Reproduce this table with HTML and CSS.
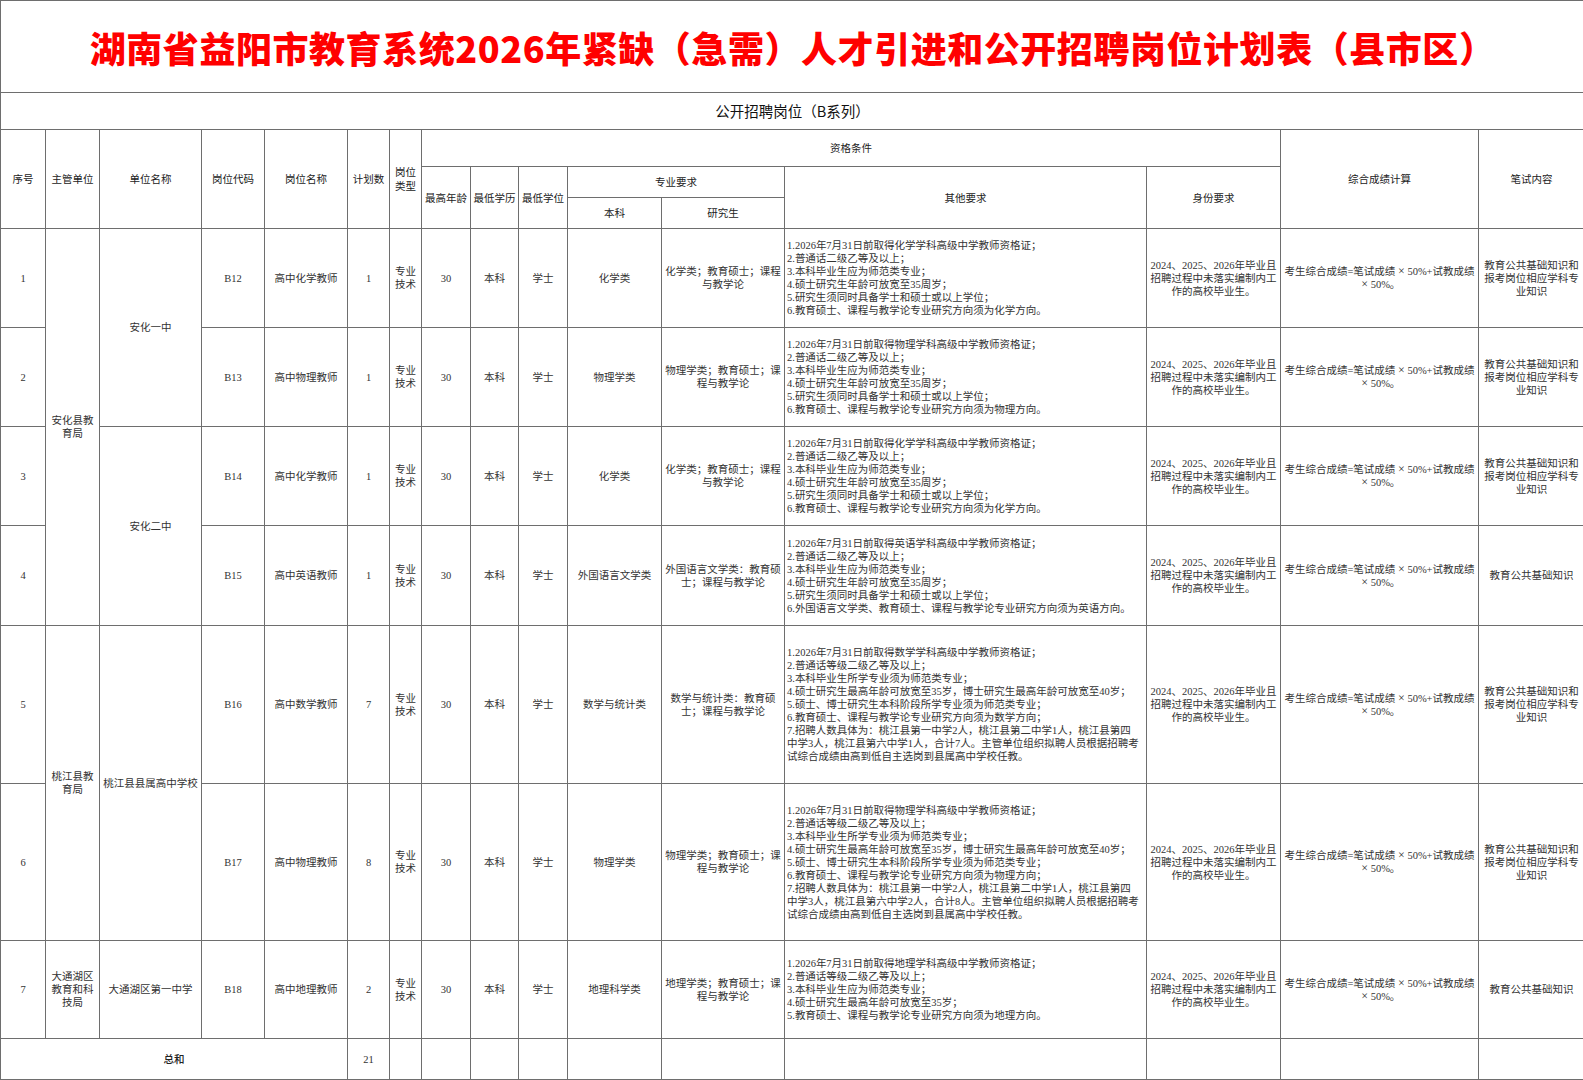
FILE: index.html
```html
<!DOCTYPE html>
<html lang="zh-CN">
<head>
<meta charset="utf-8">
<title>湖南省益阳市教育系统2026年紧缺（急需）人才引进和公开招聘岗位计划表（县市区）</title>
<link rel="stylesheet" href="styles.css">
</head>
<body>
<table class="sheet">
  <colgroup>
    <col class="w45"><col class="w54"><col class="w102"><col class="w63"><col class="w83"><col class="w42"><col class="w32"><col class="w49"><col class="w48"><col class="w49"><col class="w94"><col class="w123"><col class="w362"><col class="w134"><col class="w198"><col class="w106">
  </colgroup>
  <tr class="r-title"><td colspan="16" class="title">湖南省益阳市教育系统2026年紧缺（急需）人才引进和公开招聘岗位计划表（县市区）</td></tr>
  <tr class="r-sub"><td colspan="16" class="subtitle">公开招聘岗位（B系列）</td></tr>
  <tr class="r-h1">
    <td rowspan="3" class="hd">序号</td>
    <td rowspan="3" class="hd">主管单位</td>
    <td rowspan="3" class="hd">单位名称</td>
    <td rowspan="3" class="hd">岗位代码</td>
    <td rowspan="3" class="hd">岗位名称</td>
    <td rowspan="3" class="hd">计划数</td>
    <td rowspan="3" class="hd">岗位类型</td>
    <td colspan="7" class="hd">资格条件</td>
    <td rowspan="3" class="hd">综合成绩计算</td>
    <td rowspan="3" class="hd">笔试内容</td>
  </tr>
  <tr class="r-h2">
    <td rowspan="2" class="hd">最高年龄</td>
    <td rowspan="2" class="hd">最低学历</td>
    <td rowspan="2" class="hd">最低学位</td>
    <td colspan="2" class="hd">专业要求</td>
    <td rowspan="2" class="hd">其他要求</td>
    <td rowspan="2" class="hd">身份要求</td>
  </tr>
  <tr class="r-h3">
    <td class="hd">本科</td>
    <td class="hd">研究生</td>
  </tr>

  <tr class="r-a">
    <td class="c">1</td>
    <td rowspan="4" class="c">安化县教育局</td>
    <td rowspan="2" class="c">安化一中</td>
    <td class="c">B12</td>
    <td class="c">高中化学教师</td>
    <td class="c">1</td>
    <td class="c">专业技术</td>
    <td class="c">30</td>
    <td class="c">本科</td>
    <td class="c">学士</td>
    <td class="c">化学类</td>
    <td class="c">化学类；教育硕士；课程<br>与教学论</td>
    <td class="req">1.2026年7月31日前取得化学学科高级中学教师资格证；<br>2.普通话二级乙等及以上；<br>3.本科毕业生应为师范类专业；<br>4.硕士研究生年龄可放宽至35周岁；<br>5.研究生须同时具备学士和硕士或以上学位；<br>6.教育硕士、课程与教学论专业研究方向须为化学方向。</td>
    <td class="c">2024、2025、2026年毕业且<br>招聘过程中未落实编制内工<br>作的高校毕业生。</td>
    <td class="c">考生综合成绩=笔试成绩<span class="x">×</span>50%+试教成绩<br><span class="x">×</span>50%。</td>
    <td class="c">教育公共基础知识和<br>报考岗位相应学科专<br>业知识</td>
  </tr>
  <tr class="r-a">
    <td class="c">2</td>
    <td class="c">B13</td>
    <td class="c">高中物理教师</td>
    <td class="c">1</td>
    <td class="c">专业技术</td>
    <td class="c">30</td>
    <td class="c">本科</td>
    <td class="c">学士</td>
    <td class="c">物理学类</td>
    <td class="c">物理学类；教育硕士；课<br>程与教学论</td>
    <td class="req">1.2026年7月31日前取得物理学科高级中学教师资格证；<br>2.普通话二级乙等及以上；<br>3.本科毕业生应为师范类专业；<br>4.硕士研究生年龄可放宽至35周岁；<br>5.研究生须同时具备学士和硕士或以上学位；<br>6.教育硕士、课程与教学论专业研究方向须为物理方向。</td>
    <td class="c">2024、2025、2026年毕业且<br>招聘过程中未落实编制内工<br>作的高校毕业生。</td>
    <td class="c">考生综合成绩=笔试成绩<span class="x">×</span>50%+试教成绩<br><span class="x">×</span>50%。</td>
    <td class="c">教育公共基础知识和<br>报考岗位相应学科专<br>业知识</td>
  </tr>
  <tr class="r-a">
    <td class="c">3</td>
    <td rowspan="2" class="c">安化二中</td>
    <td class="c">B14</td>
    <td class="c">高中化学教师</td>
    <td class="c">1</td>
    <td class="c">专业技术</td>
    <td class="c">30</td>
    <td class="c">本科</td>
    <td class="c">学士</td>
    <td class="c">化学类</td>
    <td class="c">化学类；教育硕士；课程<br>与教学论</td>
    <td class="req">1.2026年7月31日前取得化学学科高级中学教师资格证；<br>2.普通话二级乙等及以上；<br>3.本科毕业生应为师范类专业；<br>4.硕士研究生年龄可放宽至35周岁；<br>5.研究生须同时具备学士和硕士或以上学位；<br>6.教育硕士、课程与教学论专业研究方向须为化学方向。</td>
    <td class="c">2024、2025、2026年毕业且<br>招聘过程中未落实编制内工<br>作的高校毕业生。</td>
    <td class="c">考生综合成绩=笔试成绩<span class="x">×</span>50%+试教成绩<br><span class="x">×</span>50%。</td>
    <td class="c">教育公共基础知识和<br>报考岗位相应学科专<br>业知识</td>
  </tr>
  <tr class="r-b">
    <td class="c">4</td>
    <td class="c">B15</td>
    <td class="c">高中英语教师</td>
    <td class="c">1</td>
    <td class="c">专业技术</td>
    <td class="c">30</td>
    <td class="c">本科</td>
    <td class="c">学士</td>
    <td class="c">外国语言文学类</td>
    <td class="c">外国语言文学类：教育硕<br>士；课程与教学论</td>
    <td class="req">1.2026年7月31日前取得英语学科高级中学教师资格证；<br>2.普通话二级乙等及以上；<br>3.本科毕业生应为师范类专业；<br>4.硕士研究生年龄可放宽至35周岁；<br>5.研究生须同时具备学士和硕士或以上学位；<br>6.外国语言文学类、教育硕士、课程与教学论专业研究方向须为英语方向。</td>
    <td class="c">2024、2025、2026年毕业且<br>招聘过程中未落实编制内工<br>作的高校毕业生。</td>
    <td class="c">考生综合成绩=笔试成绩<span class="x">×</span>50%+试教成绩<br><span class="x">×</span>50%。</td>
    <td class="c">教育公共基础知识</td>
  </tr>
  <tr class="r-c">
    <td class="c">5</td>
    <td rowspan="2" class="c">桃江县教育局</td>
    <td rowspan="2" class="c">桃江县县属高中学校</td>
    <td class="c">B16</td>
    <td class="c">高中数学教师</td>
    <td class="c">7</td>
    <td class="c">专业技术</td>
    <td class="c">30</td>
    <td class="c">本科</td>
    <td class="c">学士</td>
    <td class="c">数学与统计类</td>
    <td class="c">数学与统计类：教育硕<br>士；课程与教学论</td>
    <td class="req">1.2026年7月31日前取得数学学科高级中学教师资格证；<br>2.普通话等级二级乙等及以上；<br>3.本科毕业生所学专业须为师范类专业；<br>4.硕士研究生最高年龄可放宽至35岁，博士研究生最高年龄可放宽至40岁；<br>5.硕士、博士研究生本科阶段所学专业须为师范类专业；<br>6.教育硕士、课程与教学论专业研究方向须为数学方向；<br>7.招聘人数具体为：桃江县第一中学2人，桃江县第二中学1人，桃江县第四<br>中学3人，桃江县第六中学1人，合计7人。主管单位组织拟聘人员根据招聘考<br>试综合成绩由高到低自主选岗到县属高中学校任教。</td>
    <td class="c">2024、2025、2026年毕业且<br>招聘过程中未落实编制内工<br>作的高校毕业生。</td>
    <td class="c">考生综合成绩=笔试成绩<span class="x">×</span>50%+试教成绩<br><span class="x">×</span>50%。</td>
    <td class="c">教育公共基础知识和<br>报考岗位相应学科专<br>业知识</td>
  </tr>
  <tr class="r-d">
    <td class="c">6</td>
    <td class="c">B17</td>
    <td class="c">高中物理教师</td>
    <td class="c">8</td>
    <td class="c">专业技术</td>
    <td class="c">30</td>
    <td class="c">本科</td>
    <td class="c">学士</td>
    <td class="c">物理学类</td>
    <td class="c">物理学类；教育硕士；课<br>程与教学论</td>
    <td class="req">1.2026年7月31日前取得物理学科高级中学教师资格证；<br>2.普通话等级二级乙等及以上；<br>3.本科毕业生所学专业须为师范类专业；<br>4.硕士研究生最高年龄可放宽至35岁，博士研究生最高年龄可放宽至40岁；<br>5.硕士、博士研究生本科阶段所学专业须为师范类专业；<br>6.教育硕士、课程与教学论专业研究方向须为物理方向；<br>7.招聘人数具体为：桃江县第一中学2人，桃江县第二中学1人，桃江县第四<br>中学3人，桃江县第六中学2人，合计8人。主管单位组织拟聘人员根据招聘考<br>试综合成绩由高到低自主选岗到县属高中学校任教。</td>
    <td class="c">2024、2025、2026年毕业且<br>招聘过程中未落实编制内工<br>作的高校毕业生。</td>
    <td class="c">考生综合成绩=笔试成绩<span class="x">×</span>50%+试教成绩<br><span class="x">×</span>50%。</td>
    <td class="c">教育公共基础知识和<br>报考岗位相应学科专<br>业知识</td>
  </tr>
  <tr class="r-e">
    <td class="c">7</td>
    <td class="c">大通湖区<br>教育和科<br>技局</td>
    <td class="c">大通湖区第一中学</td>
    <td class="c">B18</td>
    <td class="c">高中地理教师</td>
    <td class="c">2</td>
    <td class="c">专业技术</td>
    <td class="c">30</td>
    <td class="c">本科</td>
    <td class="c">学士</td>
    <td class="c">地理科学类</td>
    <td class="c">地理学类；教育硕士；课<br>程与教学论</td>
    <td class="req">1.2026年7月31日前取得地理学科高级中学教师资格证；<br>2.普通话等级二级乙等及以上；<br>3.本科毕业生应为师范类专业；<br>4.硕士研究生最高年龄可放宽至35岁；<br>5.教育硕士、课程与教学论专业研究方向须为地理方向。</td>
    <td class="c">2024、2025、2026年毕业且<br>招聘过程中未落实编制内工<br>作的高校毕业生。</td>
    <td class="c">考生综合成绩=笔试成绩<span class="x">×</span>50%+试教成绩<br><span class="x">×</span>50%。</td>
    <td class="c">教育公共基础知识</td>
  </tr>
  <tr class="r-total">
    <td colspan="5" class="hd total">总和</td>
    <td class="c">21</td>
    <td></td><td></td><td></td><td></td><td></td><td></td><td></td><td></td><td></td><td></td>
  </tr>
</table>
</body>
</html>
```
FILE: styles.css
```css
html, body {
  margin: 0;
  padding: 0;
  background: #ffffff;
  overflow: hidden;
}

.sheet {
  border-collapse: collapse;
  table-layout: fixed;
  width: 1584px;
  font-family: "Liberation Serif", "Noto Sans CJK SC", serif;
  font-size: 10.5px;
  line-height: 13px;
  color: #333333;
}

.sheet td {
  border: 1px solid #6e6e6e;
  padding: 0 2px;
  vertical-align: middle;
  overflow: hidden;
}

.w45 { width: 45px; }
.w54 { width: 54px; }
.w102 { width: 102px; }
.w63 { width: 63px; }
.w83 { width: 83px; }
.w42 { width: 42px; }
.w32 { width: 32px; }
.w49 { width: 49px; }
.w48 { width: 48px; }
.w94 { width: 94px; }
.w123 { width: 123px; }
.w362 { width: 362px; }
.w134 { width: 134px; }
.w198 { width: 198px; }
.w106 { width: 106px; }

.r-title { height: 92px; }
.r-sub { height: 37px; }
.r-h1 { height: 37px; }
.r-h2 { height: 31px; }
.r-h3 { height: 31px; }
.r-a { height: 99px; }
.r-b { height: 100px; }
.r-c { height: 158px; }
.r-d { height: 157px; }
.r-e { height: 98px; }
.r-total { height: 41px; }

.title {
  text-align: center;
  padding: 0 24px 0 0;
  font-family: "Noto Sans CJK SC", sans-serif;
  font-weight: 900;
  font-size: 36px;
  line-height: 40px;
  color: #ff0000;
  letter-spacing: 0.55px;
}

.subtitle {
  text-align: center;
  font-family: "Noto Sans CJK SC", sans-serif;
  font-size: 14.5px;
  line-height: 18px;
  color: #111111;
}

.hd {
  text-align: center;
  font-family: "Noto Sans CJK SC", sans-serif;
  font-size: 10.5px;
  line-height: 14px;
  color: #222222;
}

.total {
  font-weight: 500;
}

.c {
  text-align: center;
}

.x {
  display: inline-block;
  width: 1em;
  text-align: center;
  font-size: 12px;
}

.req {
  text-align: left;
  padding: 0 0 0 1px;
  white-space: nowrap;
}
```
